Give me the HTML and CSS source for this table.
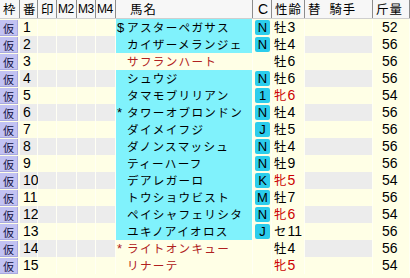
FILE: index.html
```html
<!DOCTYPE html>
<html lang="ja">
<head>
<meta charset="utf-8">
<link rel="stylesheet" href="styles.css">
</head>
<body>
<div class="table">
  <div class="row head">
    <div class="h">枠</div><div class="h">番</div><div class="h">印</div><div class="h hm">M2</div><div class="h hm">M3</div><div class="h hm">M4</div>
    <div class="h hname">馬名</div><div class="h hc">C</div><div class="h">性齢</div><div class="h hjockey">替<span class="gap"></span>騎手</div><div class="h">斤量</div>
  </div>

  <div class="row"><div class="waku"><span>仮</span></div><div class="num">1</div><div class="c"></div><div class="c"></div><div class="c"></div><div class="c"></div>
    <div class="name hl"><span class="mark">$</span>アスターペガサス</div><div class="cc"><span class="badge">N</span></div><div class="sex">牡<span class="d">3</span></div><div class="jockey"></div><div class="wt">52</div></div>
  <div class="row alt"><div class="waku"><span>仮</span></div><div class="num">2</div><div class="c"></div><div class="c"></div><div class="c"></div><div class="c"></div>
    <div class="name hl"><span class="mark"></span>カイザーメランジェ</div><div class="cc"><span class="badge">N</span></div><div class="sex">牡<span class="d">4</span></div><div class="jockey"></div><div class="wt">56</div></div>
  <div class="row"><div class="waku"><span>仮</span></div><div class="num">3</div><div class="c"></div><div class="c"></div><div class="c"></div><div class="c"></div>
    <div class="name red"><span class="mark"></span>サフランハート</div><div class="cc"></div><div class="sex">牡<span class="d">6</span></div><div class="jockey"></div><div class="wt">56</div></div>
  <div class="row alt"><div class="waku"><span>仮</span></div><div class="num">4</div><div class="c"></div><div class="c"></div><div class="c"></div><div class="c"></div>
    <div class="name hl"><span class="mark"></span>シュウジ</div><div class="cc"><span class="badge">N</span></div><div class="sex">牡<span class="d">6</span></div><div class="jockey"></div><div class="wt">56</div></div>
  <div class="row"><div class="waku"><span>仮</span></div><div class="num">5</div><div class="c"></div><div class="c"></div><div class="c"></div><div class="c"></div>
    <div class="name hl"><span class="mark"></span>タマモブリリアン</div><div class="cc"><span class="badge">1</span></div><div class="sex f">牝<span class="d">6</span></div><div class="jockey"></div><div class="wt">54</div></div>
  <div class="row alt"><div class="waku"><span>仮</span></div><div class="num">6</div><div class="c"></div><div class="c"></div><div class="c"></div><div class="c"></div>
    <div class="name hl"><span class="mark">*</span>タワーオブロンドン</div><div class="cc"><span class="badge">N</span></div><div class="sex">牡<span class="d">4</span></div><div class="jockey"></div><div class="wt">56</div></div>
  <div class="row"><div class="waku"><span>仮</span></div><div class="num">7</div><div class="c"></div><div class="c"></div><div class="c"></div><div class="c"></div>
    <div class="name hl"><span class="mark"></span>ダイメイフジ</div><div class="cc"><span class="badge">J</span></div><div class="sex">牡<span class="d">5</span></div><div class="jockey"></div><div class="wt">56</div></div>
  <div class="row alt"><div class="waku"><span>仮</span></div><div class="num">8</div><div class="c"></div><div class="c"></div><div class="c"></div><div class="c"></div>
    <div class="name hl"><span class="mark"></span>ダノンスマッシュ</div><div class="cc"><span class="badge">N</span></div><div class="sex">牡<span class="d">4</span></div><div class="jockey"></div><div class="wt">56</div></div>
  <div class="row"><div class="waku"><span>仮</span></div><div class="num">9</div><div class="c"></div><div class="c"></div><div class="c"></div><div class="c"></div>
    <div class="name hl"><span class="mark"></span>ティーハーフ</div><div class="cc"><span class="badge">N</span></div><div class="sex">牡<span class="d">9</span></div><div class="jockey"></div><div class="wt">56</div></div>
  <div class="row alt"><div class="waku"><span>仮</span></div><div class="num">10</div><div class="c"></div><div class="c"></div><div class="c"></div><div class="c"></div>
    <div class="name hl"><span class="mark"></span>デアレガーロ</div><div class="cc"><span class="badge">K</span></div><div class="sex f">牝<span class="d">5</span></div><div class="jockey"></div><div class="wt">54</div></div>
  <div class="row"><div class="waku"><span>仮</span></div><div class="num">11</div><div class="c"></div><div class="c"></div><div class="c"></div><div class="c"></div>
    <div class="name hl"><span class="mark"></span>トウショウビスト</div><div class="cc"><span class="badge">M</span></div><div class="sex">牡<span class="d">7</span></div><div class="jockey"></div><div class="wt">56</div></div>
  <div class="row alt"><div class="waku"><span>仮</span></div><div class="num">12</div><div class="c"></div><div class="c"></div><div class="c"></div><div class="c"></div>
    <div class="name hl"><span class="mark"></span>ペイシャフェリシタ</div><div class="cc"><span class="badge">N</span></div><div class="sex f">牝<span class="d">6</span></div><div class="jockey"></div><div class="wt">54</div></div>
  <div class="row"><div class="waku"><span>仮</span></div><div class="num">13</div><div class="c"></div><div class="c"></div><div class="c"></div><div class="c"></div>
    <div class="name hl"><span class="mark"></span>ユキノアイオロス</div><div class="cc"><span class="badge">J</span></div><div class="sex">セ<span class="d">11</span></div><div class="jockey"></div><div class="wt">56</div></div>
  <div class="row alt"><div class="waku"><span>仮</span></div><div class="num">14</div><div class="c"></div><div class="c"></div><div class="c"></div><div class="c"></div>
    <div class="name red"><span class="mark">*</span>ライトオンキュー</div><div class="cc"></div><div class="sex">牡<span class="d">4</span></div><div class="jockey"></div><div class="wt">56</div></div>
  <div class="row"><div class="waku"><span>仮</span></div><div class="num">15</div><div class="c"></div><div class="c"></div><div class="c"></div><div class="c"></div>
    <div class="name red"><span class="mark"></span>リナーテ</div><div class="cc"></div><div class="sex f">牝<span class="d">5</span></div><div class="jockey"></div><div class="wt">54</div></div>
</div>
</body>
</html>
```

FILE: styles.css
```css
html, body {
  margin: 0;
  padding: 0;
  background: #ffffe6;
}
body {
  font-family: "Noto Sans CJK JP", "DejaVu Sans", sans-serif;
  font-size: 11.6px;
  color: #000;
  width: 410px;
  overflow: hidden;
}
.table {
  display: flex;
  flex-direction: column;
}
.row {
  display: grid;
  grid-template-columns: 20px 18px 19px 20px 19px 20px 137px 19px 33px 68px 37px;
  height: 17px;
  line-height: 17px;
}
.row > div {
  box-sizing: border-box;
  border-right: 1px solid #fffff4;
  white-space: nowrap;
  height: 17px;
}
.head {
  height: 19px;
  line-height: 18px;
  background: #f7f7f7;
  border-bottom: 1px solid #cfcfcf;
  box-sizing: border-box;
}
.head > div.h {
  height: 18px;
  border-right: 1px solid #8c8c8c;
  padding-left: 3px;
  font-size: 12.4px;
  letter-spacing: 1px;
}
.head > div.hm {
  font-family: "Liberation Sans", sans-serif;
  font-size: 12px;
  padding-left: 1px;
  letter-spacing: -0.5px;
}
.head > div.hname {
  padding-left: 14px;
}
.head > div.hc {
  padding-left: 5px;
  font-family: "Liberation Sans", sans-serif;
  font-size: 14px;
}
.gap {
  display: inline-block;
  width: 8px;
}
.waku {
  padding: 1px 1px 0 0;
}
.waku span {
  display: block;
  height: 16px;
  line-height: 16px;
  background: #c2c2f2;
  border-right: 1px solid #a8a8e0;
  border-bottom: 1px solid #a8a8e0;
  box-sizing: border-box;
  text-align: center;
  color: #101040;
  font-size: 11px;
}
.num,
.wt,
.d {
  font-family: "Liberation Sans", sans-serif;
  font-size: 14px;
  letter-spacing: 0;
}
.num {
  padding-left: 3px;
}
.alt .num,
.alt .c,
.alt .jockey {
  background: #ececec;
}
.name {
  padding-left: 1px;
  overflow: hidden;
  letter-spacing: 1.3px;
}
.name.hl {
  background: #80f2fc;
}
.name.red {
  color: #b02020;
}
.mark {
  display: inline-block;
  width: 10px;
  text-align: left;
  font-family: "Liberation Sans", sans-serif;
  font-size: 13px;
  letter-spacing: 0;
}
.cc {
  padding: 1px 0 0 2px;
}
.badge {
  display: block;
  width: 15px;
  height: 15px;
  line-height: 15px;
  border-radius: 2px;
  background: #2ccdec;
  text-align: center;
  font-family: "Liberation Sans", sans-serif;
  font-size: 13px;
}
.sex {
  padding-left: 2px;
  font-size: 12.4px;
  letter-spacing: 1px;
}
.sex.f {
  color: #cc0000;
}
.wt {
  padding-left: 9px;
}
```
